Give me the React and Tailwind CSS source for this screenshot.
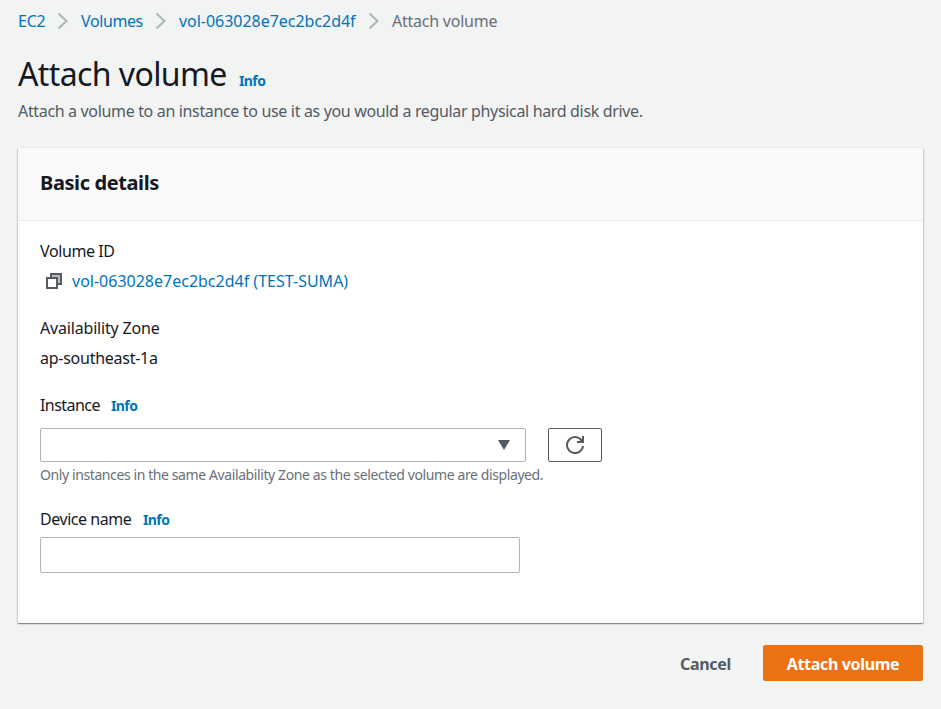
function Chevron({ className }) {
  return (
    <svg className={`h-[18px] w-[12px] shrink-0 ${className}`} viewBox="0 0 12 18" fill="none" stroke="#aab7b8" strokeWidth="2">
      <path d="M1.5 1.5 L9.5 9 L1.5 16.5" />
    </svg>
  );
}

function Info({ className = "" }) {
  return <a className={`text-[14px] font-bold tracking-[-0.6px] text-[#0073bb] ${className}`}>Info</a>;
}

function Label({ children, className = "" }) {
  return <span className={`text-[16px] ${className}`}>{children}</span>;
}

export default function App() {
  return (
    <div className="h-[709px] w-[941px] overflow-hidden bg-[#f2f3f3] px-[18px] pt-[10px] font-['Noto_Sans','Open_Sans',sans-serif] text-[#16191f] whitespace-nowrap">
      <nav className="flex h-[22px] items-center text-[16px] text-[#0073bb]">
        <a className="w-[39px] tracking-[-0.25px]">EC2</a>
        <Chevron className="mr-[12px]" />
        <a className="w-[74px] tracking-[-0.4px]">Volumes</a>
        <Chevron className="mr-[12px]" />
        <a className="w-[189px] tracking-[-0.03px]">vol-063028e7ec2bc2d4f</a>
        <Chevron className="mr-[12px]" />
        <span className="tracking-[-0.23px] text-[#687078]">Attach volume</span>
      </nav>

      <header>
        <div className="mt-[22px] flex h-[40px] items-baseline leading-[40px]">
          <h1 className="w-[221px] text-[32px] tracking-[-0.6px]">Attach volume</h1>
          <Info className="-mt-px" />
        </div>
        <p className="mt-[6px] h-[22px] text-[16px] leading-[22px] tracking-[-0.34px] text-[#545b64]">
          Attach a volume to an instance to use it as you would a regular physical hard disk drive.
        </p>
      </header>

      <section className="mt-[26px] h-[475px] w-[905px] bg-white shadow-[0_1px_1px_0_rgba(0,28,36,0.3),1px_1px_1px_0_rgba(0,28,36,0.12),-1px_1px_1px_0_rgba(0,28,36,0.12),0_-1px_0_0_#eaeded]">
        <div className="flex h-[73px] items-center border-b border-[#eaeded] bg-[#fafafa] px-[22px] pb-[3px]">
          <h2 className="text-[20px] font-bold tracking-[-0.4px]">Basic details</h2>
        </div>
        <div className="px-[22px] pt-[19px]">
          <div className="flex h-[22px] items-center"><Label className="tracking-[-0.4px]">Volume ID</Label></div>
          <div className="mt-[8px] flex h-[22px] items-center pl-[6px]">
            <svg className="mr-[10px] h-4 w-4" viewBox="0 0 16 16" stroke="#545b64" strokeWidth="2">
              <path d="M5 1H15V11H5Z" fill="#b7bbc0" />
              <path d="M1 5H11V15H1Z" fill="#ffffff" />
            </svg>
            <a className="text-[16px] text-[#0073bb]">vol-063028e7ec2bc2d4f (TEST-SUMA)</a>
          </div>
          <div className="mt-[25px] flex h-[22px] items-center"><Label className="tracking-[-0.18px]">Availability Zone</Label></div>
          <div className="mt-[8px] flex h-[22px] items-center"><Label className="tracking-[-0.26px]">ap-southeast-1a</Label></div>
          <div className="mt-[25px] flex h-[22px] items-center">
            <div className="w-[71px]"><Label className="tracking-[-0.55px]">Instance</Label></div>
            <Info className="mt-[1px]" />
          </div>
          <div className="mt-[12px] flex gap-[22px]">
            <button className="flex h-[34px] w-[486px] items-center justify-end rounded-[2px] border border-[#aab7b8] bg-white pr-[15px]">
              <svg className="h-[10px] w-[12px]" viewBox="0 0 12 10" fill="#545b64"><path d="M0 0H12L6 10Z" /></svg>
            </button>
            <button className="flex h-[34px] w-[54px] items-center justify-center rounded-[2px] border border-[#545b64] bg-white">
              <svg className="h-[18px] w-[18px]" viewBox="0 0 18 18" fill="none" stroke="#545b64" strokeWidth="2">
                <path d="M17 10A8 8 0 1 1 14.6 3.3L16.5 5.5" />
                <path d="M17 0V6H11" />
                <path d="M16.5 2.5V5.5H13.5Z" fill="#545b64" stroke="none" />
              </svg>
            </button>
          </div>
          <p className="mt-[3px] h-[20px] text-[14px] leading-[20px] tracking-[-0.4px] text-[#687078]">
            Only instances in the same Availability Zone as the selected volume are displayed.
          </p>
          <div className="mt-[23px] flex h-[22px] items-center">
            <div className="w-[103px]"><Label className="tracking-[-0.45px]">Device name</Label></div>
            <Info className="mt-[1px]" />
          </div>
          <input className="mt-[7px] block h-[36px] w-[480px] rounded-[2px] border border-[#aab7b8] bg-white" />
        </div>
      </section>

      <footer className="mt-[22px] flex justify-end text-[16px] font-bold">
        <button className="mr-[32px] pt-px tracking-[-0.3px] text-[#545b64]">Cancel</button>
        <button className="h-[36px] w-[160px] rounded-[2px] bg-[#ec7211] pt-px tracking-[-0.33px] text-white">Attach volume</button>
      </footer>
    </div>
  );
}
